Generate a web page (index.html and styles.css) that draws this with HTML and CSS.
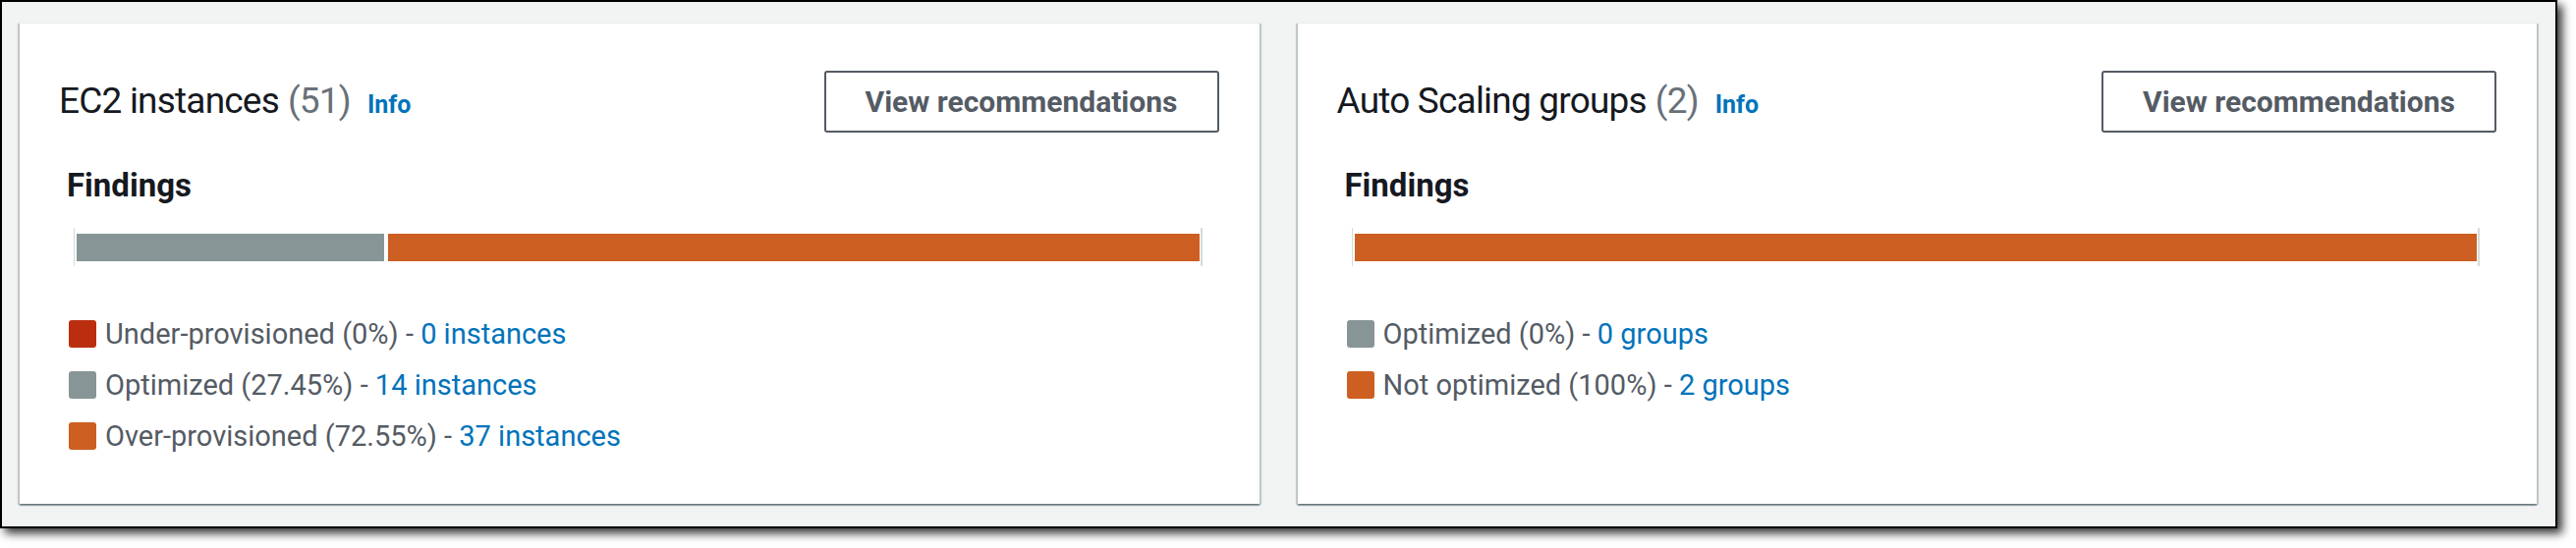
FILE: index.html
```html
<!DOCTYPE html>
<html lang="en">
<head>
<meta charset="utf-8">
<title>Compute Optimizer findings</title>
<link rel="stylesheet" href="styles.css">
</head>
<body>
<div class="frame">
  <div class="cards">
    <section class="card">
      <header class="card-header">
        <h2 class="title">EC2 instances <span class="count">(51)</span><a class="info" href="#">Info</a></h2>
        <button class="btn" type="button">View recommendations</button>
      </header>
      <div class="card-body">
        <h3 class="findings">Findings</h3>
        <div class="bar">
          <div class="bar-fill">
            <span class="seg seg-gray" style="width:27.45%"></span>
            <span class="seg seg-orange" style="width:72.55%"></span>
          </div>
        </div>
        <ul class="legend">
          <li><span class="swatch sw-red"></span><span class="label">Under-provisioned (0%) - </span><a class="link" href="#">0 instances</a></li>
          <li><span class="swatch sw-gray"></span><span class="label">Optimized (27.45%) - </span><a class="link" href="#">14 instances</a></li>
          <li><span class="swatch sw-orange"></span><span class="label">Over-provisioned (72.55%) - </span><a class="link" href="#">37 instances</a></li>
        </ul>
      </div>
    </section>
    <section class="card">
      <header class="card-header">
        <h2 class="title">Auto Scaling groups <span class="count">(2)</span><a class="info" href="#">Info</a></h2>
        <button class="btn" type="button">View recommendations</button>
      </header>
      <div class="card-body">
        <h3 class="findings">Findings</h3>
        <div class="bar">
          <div class="bar-fill">
            <span class="seg seg-orange" style="width:100%"></span>
          </div>
        </div>
        <ul class="legend">
          <li><span class="swatch sw-gray"></span><span class="label">Optimized (0%) - </span><a class="link" href="#">0 groups</a></li>
          <li><span class="swatch sw-orange"></span><span class="label">Not optimized (100%) - </span><a class="link" href="#">2 groups</a></li>
        </ul>
      </div>
    </section>
  </div>
</div>
</body>
</html>
```

FILE: styles.css
```css
* { box-sizing: border-box; }

html, body {
  margin: 0;
  padding: 0;
  background: #ffffff;
}

body {
  font-family: Roboto, "Noto Sans", "Liberation Sans", sans-serif;
  width: 2622px;
  height: 558px;
  overflow: hidden;
}

.frame {
  width: 2603px;
  height: 538px;
  background: #f2f3f3;
  border: 2px solid #000000;
  box-shadow: 5px 5px 9px rgba(0, 0, 0, 0.8);
  padding: 21px 19px 23px 18px;
}

.cards {
  display: flex;
  gap: 39px;
  height: 100%;
}

.card {
  flex: 1 1 0;
  background: #ffffff;
  border-top: 1px solid #eaeded;
  box-shadow: 0 2px 1px 0 rgba(0, 28, 36, 0.35),
              2px 1px 1px 0 rgba(0, 28, 36, 0.18),
              -2px 1px 1px 0 rgba(0, 28, 36, 0.18);
  display: flex;
  flex-direction: column;
}

.card-header {
  display: flex;
  align-items: center;
  justify-content: space-between;
  padding: 48px 41px 0 40px;
}

.title {
  margin: 0;
  font-size: 37px;
  font-weight: 400;
  letter-spacing: -0.8px;
  color: #16191f;
  line-height: 44px;
  display: flex;
  align-items: baseline;
  position: relative;
  top: 1px;
}

.count {
  color: #687078;
  margin-left: 9px;
}

.info {
  font-size: 25px;
  font-weight: 700;
  letter-spacing: 0;
  color: #0073bb;
  text-decoration: none;
  margin-left: 17px;
}

.btn {
  width: 402px;
  height: 63px;
  background: #ffffff;
  border: 2px solid #545b64;
  border-radius: 3px;
  color: #545b64;
  font-family: inherit;
  font-size: 30px;
  font-weight: 700;
  padding: 0;
}

.card-body {
  padding: 0 50px 0 50px;
}

.findings {
  margin: 34px 0 0 -2px;
  font-size: 33px;
  font-weight: 700;
  line-height: 40px;
  color: #16191f;
}

.bar {
  margin: 23px 8px 0 5px;
  height: 39px;
  border-left: 1px solid #d5dbdb;
  border-right: 2px solid #d5dbdb;
  padding: 6px 1px 5px 2px;
}

.bar-fill {
  display: flex;
  height: 28px;
  gap: 4px;
}

.seg {
  display: block;
  height: 100%;
}

.seg-gray { background: #879596; }
.seg-orange { background: #cc5f21; }

.legend {
  list-style: none;
  margin: 55px 0 0 0;
  padding: 0;
  display: flex;
  flex-direction: column;
  gap: 24px;
}

.legend li {
  display: flex;
  align-items: center;
  height: 28px;
  font-size: 29px;
  line-height: 28px;
  color: #545b64;
  white-space: pre;
}

.swatch {
  width: 28px;
  height: 28px;
  border-radius: 3px;
  margin-right: 9px;
  flex: none;
}

.sw-red { background: #ba2e0f; }
.sw-gray { background: #879596; }
.sw-orange { background: #cc5f21; }

.link {
  color: #0073bb;
  text-decoration: none;
}
```
